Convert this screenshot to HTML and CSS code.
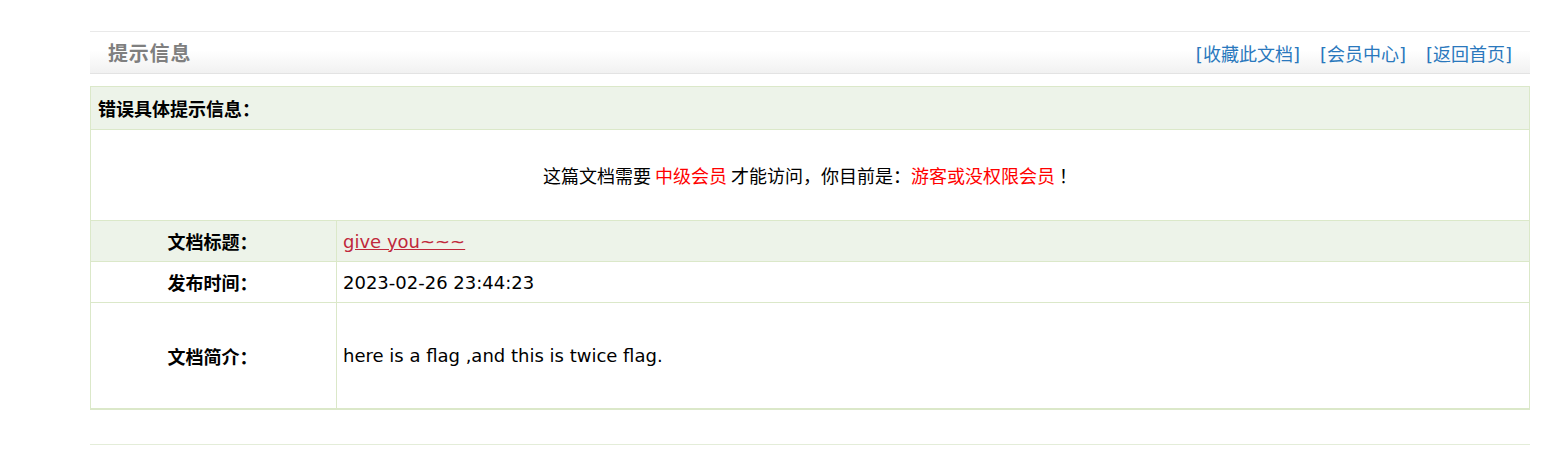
FILE: index.html
```html
<!DOCTYPE html>
<html lang="zh-CN">
<head>
<meta charset="utf-8">
<title>提示信息</title>
<link rel="stylesheet" href="styles.css">
</head>
<body>
<div class="wrap">
  <div class="bar">
    <h1 class="bar-title">提示信息</h1>
    <nav class="bar-links">
      <a href="#">[收藏此文档]</a>
      <a href="#">[会员中心]</a>
      <a href="#">[返回首页]</a>
    </nav>
  </div>
  <table class="info">
    <tr class="head">
      <th colspan="2">错误具体提示信息：</th>
    </tr>
    <tr class="msg">
      <td colspan="2">这篇文档需要 <span class="red">中级会员</span> 才能访问，你目前是：<span class="red">游客或没权限会员</span> ！</td>
    </tr>
    <tr class="row alt">
      <td class="label">文档标题：</td>
      <td class="value"><a class="doc-link" href="#">give you~~~</a></td>
    </tr>
    <tr class="row">
      <td class="label">发布时间：</td>
      <td class="value">2023-02-26 23:44:23</td>
    </tr>
    <tr class="row tall">
      <td class="label">文档简介：</td>
      <td class="value">here is a flag ,and this is twice flag.</td>
    </tr>
  </table>
  <div class="foot"></div>
</div>
</body>
</html>
```

FILE: styles.css
```css
html, body {
  margin: 0;
  padding: 0;
  background: #fff;
}
body {
  font-family: "DejaVu Sans", "Noto Sans CJK SC", sans-serif;
  font-size: 18px;
  color: #000;
}
.wrap {
  width: 1440px;
  margin-left: 90px;
  padding-top: 31px;
}
.bar {
  height: 41px;
  border-top: 1px solid #e9e9e9;
  border-bottom: 1px solid #e3e3e3;
  background: linear-gradient(#ffffff, #ffffff 45%, #f1f1f1);
  display: flex;
  align-items: center;
  justify-content: space-between;
  padding: 0 18px;
}
.bar-title {
  margin: 0;
  font-family: "Noto Sans CJK SC", sans-serif;
  font-size: 20px;
  font-weight: bold;
  color: #7f7f7f;
  letter-spacing: 0.8px;
}
.bar-links {
  display: flex;
  gap: 20px;
}
.bar-links a {
  font-family: "DejaVu Sans", "Noto Sans CJK SC", sans-serif;
  font-size: 18px;
  color: #2a78bd;
  text-decoration: none;
}
.info {
  margin-top: 12px;
  width: 100%;
  border-collapse: separate;
  border-spacing: 0;
  border: 1px solid #dbe8c9;
}
.info th, .info td {
  border: 0 solid #dbe8c9;
  border-bottom-width: 1px;
  padding: 0;
  box-sizing: border-box;
}
.info tr.row td.label {
  border-right-width: 1px;
}
.head th {
  height: 43px;
  background: #edf3e9;
  text-align: left;
  padding-left: 7px;
  font-family: "Noto Sans CJK SC", sans-serif;
  font-weight: bold;
  font-size: 18px;
}
.msg td {
  height: 91px;
  text-align: center;
  font-family: "Noto Sans CJK SC", sans-serif;
  font-size: 18px;
}
.red {
  color: #ff0000;
}
.row td {
  height: 41px;
}
.row.alt td {
  background: #edf3e9;
}
.row.tall td {
  height: 106px;
}
.info td.label {
  width: 246px;
  text-align: center;
  font-family: "Noto Sans CJK SC", sans-serif;
  font-weight: bold;
  font-size: 18px;
  padding-right: 2px;
}
.info td.value {
  padding-left: 6px;
  text-align: left;
}
.doc-link {
  color: #c0283b;
  text-decoration: underline;
}
.foot {
  margin-top: 34px;
  border-top: 1px solid #e4edd9;
}
```
